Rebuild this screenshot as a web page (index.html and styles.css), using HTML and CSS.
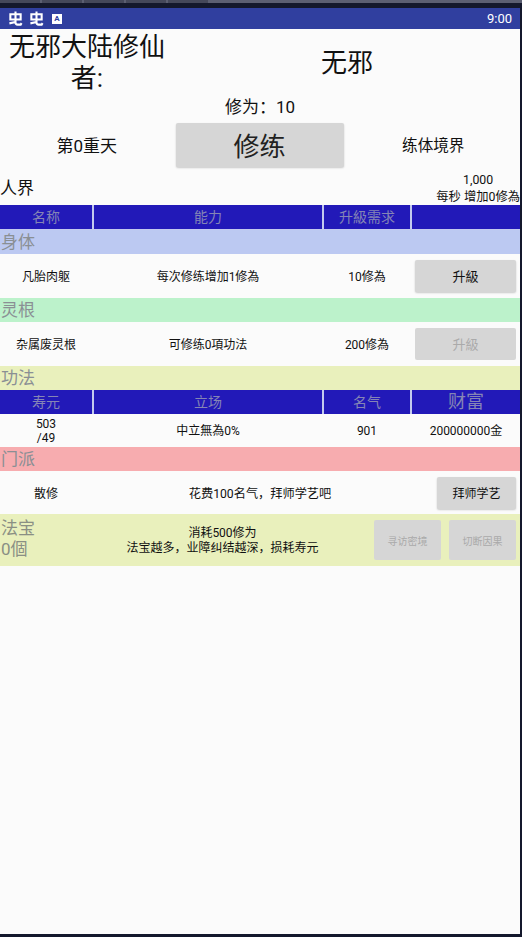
FILE: index.html
```html
<!DOCTYPE html>
<html lang="zh">

<head>
    <meta charset="UTF-8">
    <meta name="viewport" content="width=device-width, initial-scale=1.0">
    <title>无邪大陆修仙者</title>
    <link rel="stylesheet" href="styles.css">
</head>

<body>
    <div class="chrome">
        <div class="chrome-strip">
            <span class="chrome-tab"></span>
            <span class="chrome-tab"></span>
            <span class="chrome-tab"></span>
            <span class="chrome-tab"></span>
            <span class="chrome-tab"></span>
        </div>
    </div>

    <div class="app">
        <header class="status-bar">
            <svg class="bug" viewBox="0 0 16 16" fill="none" stroke="#fff" stroke-width="2.2">
                <path d="M2.5 3.5h11v5.5h-11zM8 0.5v11.8c0 1.6 .8 2.2 2.2 2.2h3.3l1-1.6M1.5 13.2l6.5-1.4" />
            </svg>
            <svg class="bug" viewBox="0 0 16 16" fill="none" stroke="#fff" stroke-width="2.2">
                <path d="M2.5 3.5h11v5.5h-11zM8 0.5v11.8c0 1.6 .8 2.2 2.2 2.2h3.3l1-1.6M1.5 13.2l6.5-1.4" />
            </svg>
            <span class="a-icon">A</span>
            <span class="clock">9:00</span>
        </header>

        <main>
            <div class="title-row">
                <h1 class="player-label">无邪大陆修仙者:</h1>
                <div class="player-name">无邪</div>
            </div>

            <div class="xiuwei">修为：10</div>

            <div class="train-row">
                <div class="train-side train-side-left">第0重天</div>
                <button class="btn btn-train">修练</button>
                <div class="train-side train-side-right">练体境界</div>
            </div>

            <div class="realm-row">
                <div class="realm-name">人界</div>
                <div class="realm-stats">
                    <div class="realm-total">1,000</div>
                    <div>每秒 增加0修為</div>
                </div>
            </div>

            <div class="table-head">
                <div>名称</div>
                <div>能力</div>
                <div>升級需求</div>
                <div></div>
            </div>

            <div class="section section-body">身体</div>
            <div class="table-row">
                <div>凡胎肉躯</div>
                <div>每次修练增加1修為</div>
                <div>10修為</div>
                <div class="cell-btn"><button class="btn btn-up">升級</button></div>
            </div>

            <div class="section section-root">灵根</div>
            <div class="table-row">
                <div>杂属废灵根</div>
                <div>可修练0項功法</div>
                <div>200修為</div>
                <div class="cell-btn"><button class="btn btn-up btn-off">升級</button></div>
            </div>

            <div class="section section-skill">功法</div>
            <div class="table-head table-head-flat">
                <div>寿元</div>
                <div>立场</div>
                <div>名气</div>
                <div class="head-big">财富</div>
            </div>
            <div class="table-row table-row-info">
                <div>503<br>/49</div>
                <div>中立無為0%</div>
                <div>901</div>
                <div>200000000金</div>
            </div>

            <div class="section section-sect">门派</div>
            <div class="sect-row">
                <div class="sect-name">散修</div>
                <div class="sect-text">花费100名气，拜师学艺吧</div>
                <button class="btn btn-master">拜师学艺</button>
            </div>

            <div class="treasure-row">
                <div class="treasure-name">法宝<br>0個</div>
                <div class="treasure-text">消耗500修为<br>法宝越多，业障纠结越深，损耗寿元</div>
                <button class="btn btn-small btn-off">寻访密境</button>
                <button class="btn btn-small btn-off">切断因果</button>
            </div>
        </main>
    </div>
</body>

</html>
```

FILE: styles.css
```css
* {
    box-sizing: border-box;
}

html, body {
    height: 100%;
}

body {
    margin: 0;
    background-color: #14182c;
    font-family: Roboto, "Noto Sans CJK SC", sans-serif;
    color: #111;
    display: flex;
    flex-direction: column;
    overflow: hidden;
}

.chrome {
    height: 8px;
    flex-shrink: 0;
}

.chrome-strip {
    height: 3px;
    background-color: #5c5f72;
    display: flex;
    gap: 2px;
}

.chrome-tab {
    width: 40px;
    background-color: #45485a;
}

.app {
    width: 520px;
    height: 926px;
    background-color: #fbfbfb;
    display: flex;
    flex-direction: column;
}

/* barra de estado */
.status-bar {
    height: 21px;
    flex-shrink: 0;
    background-color: #303f9f;
    display: flex;
    align-items: center;
    padding: 0 8px;
    color: #fff;
}

.bug {
    width: 15px;
    height: 15px;
    margin-right: 6px;
}

.a-icon {
    width: 10px;
    height: 10px;
    margin-left: 2px;
    background-color: #fff;
    color: #303f9f;
    font-size: 8px;
    font-weight: 700;
    line-height: 10px;
    text-align: center;
}

.clock {
    margin-left: auto;
    font-size: 13px;
}

.title-row {
    height: 64px;
    display: flex;
    align-items: center;
}

.player-label {
    width: 174px;
    margin: 0;
    padding: 4px 6px 0;
    font-size: 26px;
    font-weight: 400;
    line-height: 31px;
    text-align: center;
}

.player-name {
    flex: 1;
    font-size: 26px;
    text-align: center;
    padding-bottom: 1px;
}

.xiuwei {
    height: 30px;
    font-size: 17px;
    line-height: 28px;
    text-align: center;
}

.train-row {
    height: 44px;
    display: flex;
    align-items: center;
}

.train-side {
    flex: 1;
    font-size: 17px;
    text-align: center;
    padding-bottom: 2px;
}

.train-side-left {
    padding-right: 2px;
}

.train-side-right {
    padding-left: 3px;
    font-size: 15.6px;
}

.btn {
    border: none;
    padding: 0;
    background-color: #d6d6d6;
    border-radius: 2px;
    box-shadow: 0 1px 2px rgba(0, 0, 0, 0.2);
    font-family: inherit;
    color: #111;
}

.btn-train {
    width: 168px;
    height: 44px;
    padding-bottom: 2px;
    font-size: 26px;
    color: #222;
}

.btn-off {
    box-shadow: none;
    color: #aaa;
}

.realm-row {
    height: 38px;
    display: flex;
    justify-content: space-between;
    align-items: center;
}

.realm-name {
    font-size: 17px;
}

.realm-stats {
    padding-top: 5px;
    font-size: 12.3px;
    line-height: 17px;
    text-align: center;
}

.table-head {
    height: 25px;
    display: grid;
    grid-template-columns: 92px 228px 86px 1fr;
    gap: 2px;
    padding-bottom: 1px;
    background-color: #c3c9ee;
}

.table-head-flat {
    height: 24px;
    padding-bottom: 0;
}

.table-head div {
    background-color: #2219b8;
    color: #8585b5;
    font-size: 14px;
    line-height: 24px;
    text-align: center;
}

.table-head .head-big {
    font-size: 18px;
}

.section {
    height: 24px;
    padding-left: 1px;
    color: #8a8f94;
    font-size: 17px;
    line-height: 24px;
}

.section-body {
    background-color: #bcc9f2;
}

.section-root {
    background-color: #bcf2cb;
}

.section-skill {
    background-color: #e9f0bc;
}

.section-sect {
    background-color: #f7acaf;
}

.table-row {
    height: 44px;
    display: grid;
    grid-template-columns: 92px 228px 86px 1fr;
    gap: 2px;
    align-items: center;
    padding-bottom: 1px;
    font-size: 12px;
    text-align: center;
}

.table-row-info {
    height: 33px;
    padding-bottom: 0;
    line-height: 14px;
}

.cell-btn {
    display: flex;
    justify-content: flex-end;
    padding-right: 4px;
}

.btn-up {
    width: 101px;
    height: 32px;
    font-size: 13px;
}

.sect-row {
    height: 43px;
    display: flex;
    align-items: center;
    font-size: 12px;
    text-align: center;
}

.sect-name {
    width: 92px;
}

.sect-text {
    flex: 1;
    margin-right: 9px;
    font-size: 12.2px;
}

.btn-master {
    width: 79px;
    height: 32px;
    margin-right: 4px;
    font-size: 12px;
}

.treasure-row {
    height: 52px;
    display: flex;
    align-items: center;
    background-color: #e9f0bc;
    font-size: 12px;
}

.treasure-name {
    width: 79px;
    padding: 0 0 3px 1px;
    color: #8a8f84;
    font-size: 17px;
    line-height: 21px;
}

.treasure-text {
    flex: 1;
    padding-top: 2px;
    line-height: 15px;
    text-align: center;
}

.btn-small {
    width: 67px;
    height: 40px;
    margin-left: 8px;
    font-size: 10px;
}

.btn-small:last-child {
    margin-right: 4px;
}
```
